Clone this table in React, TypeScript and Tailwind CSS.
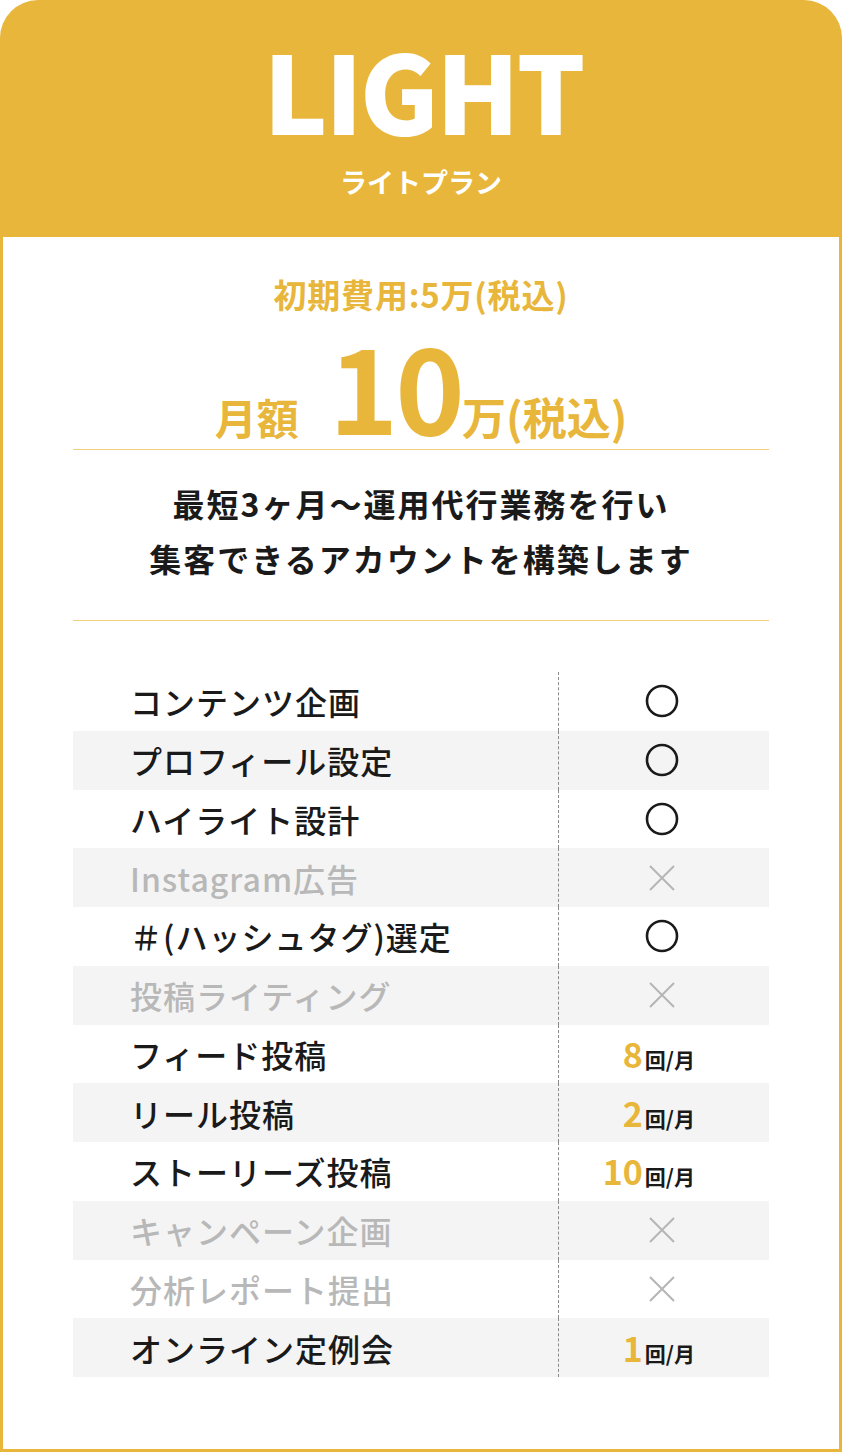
const jp = { fontFamily: '"Noto Sans CJK JP", "Noto Sans", sans-serif' };

type Row = {
  label: string;
  value: "o" | "x" | number;
};

const rows: Row[] = [
  { label: "コンテンツ企画", value: "o" },
  { label: "プロフィール設定", value: "o" },
  { label: "ハイライト設計", value: "o" },
  { label: "Instagram広告", value: "x" },
  { label: "＃(ハッシュタグ)選定", value: "o" },
  { label: "投稿ライティング", value: "x" },
  { label: "フィード投稿", value: 8 },
  { label: "リール投稿", value: 2 },
  { label: "ストーリーズ投稿", value: 10 },
  { label: "キャンペーン企画", value: "x" },
  { label: "分析レポート提出", value: "x" },
  { label: "オンライン定例会", value: 1 },
];

function Circle() {
  return (
    <svg width="34" height="34" viewBox="0 0 34 34" fill="none">
      <circle cx="17" cy="17" r="15" stroke="#1a1a1a" strokeWidth="2.6" />
    </svg>
  );
}

function Cross() {
  return (
    <svg width="28" height="28" viewBox="0 0 28 28" fill="none">
      <path d="M2 2L26 26M26 2L2 26" stroke="#b5b5b5" strokeWidth="2" />
    </svg>
  );
}

export default function App() {
  return (
    <div className="bg-white w-[844px] h-[1453px]" style={jp}>
      <div className="w-[842px] h-[1452px] flex flex-col rounded-t-[38px] overflow-hidden">
        {/* Header */}
        <div className="bg-[#e8b63a] h-[237px] flex flex-col items-center text-white">
          <div className="text-[108px] font-black leading-none mt-[34px] tracking-[-3px] pl-[4px]">
            LIGHT
          </div>
          <div className="text-[27px] font-bold leading-none mt-[26px]">
            ライトプラン
          </div>
        </div>

        {/* Body */}
        <div className="flex-1 border-[3px] border-t-0 border-[#e8b63a] px-[70px] flex flex-col">
          <div className="text-center text-[#e8b63a] font-bold text-[33px] tracking-[0.8px] leading-none mt-[41px]">
            初期費用:5万(税込)
          </div>

          <div className="flex items-baseline justify-center text-[#e8b63a] font-bold leading-none mt-[14px] pb-[6px]">
            <span className="text-[42px] mr-[30px]">月額</span>
            <span className="text-[118px] tracking-[-3px]">10</span>
            <span className="text-[44px]">万(税込)</span>
          </div>
          <div className="h-px bg-[#f0cf7d]" />

          <div className="text-center text-[#1a1a1a] font-bold text-[32px] leading-[55px] tracking-[2px] pt-[26px] pb-[34px]">
            <div>最短3ヶ月〜運用代行業務を行い</div>
            <div>集客できるアカウントを構築します</div>
          </div>
          <div className="h-px bg-[#f0cf7d]" />

          {/* Table */}
          <div className="mt-[51px] flex flex-col">
            {rows.map((row, i) => {
              const muted = row.value === "x";
              return (
                <div
                  key={row.label}
                  className={`flex h-[58.75px] ${i % 2 === 1 ? "bg-[#f4f4f4]" : "bg-white"}`}
                >
                  <div
                    className={`w-[486px] flex items-center pl-[57px] text-[32px] font-medium tracking-[1px] border-r border-dashed border-[#8a8a8a] ${
                      muted ? "text-[#b8b8b8]" : "text-[#1a1a1a]"
                    }`}
                  >
                    {row.label}
                  </div>
                  <div className="flex-1 flex items-center">
                    {row.value === "o" && (
                      <div className="flex-1 flex justify-center pr-[4px]">
                        <Circle />
                      </div>
                    )}
                    {row.value === "x" && (
                      <div className="flex-1 flex justify-center pr-[4px]">
                        <Cross />
                      </div>
                    )}
                    {typeof row.value === "number" && (
                      <div className="flex-1 flex justify-end items-baseline pr-[74px] font-bold leading-none">
                        <span className="text-[34px] text-[#e8b63a]">{row.value}</span>
                        <span className="text-[21px] text-[#1a1a1a] ml-[2px]">回/月</span>
                      </div>
                    )}
                  </div>
                </div>
              );
            })}
          </div>
        </div>
      </div>
    </div>
  );
}
